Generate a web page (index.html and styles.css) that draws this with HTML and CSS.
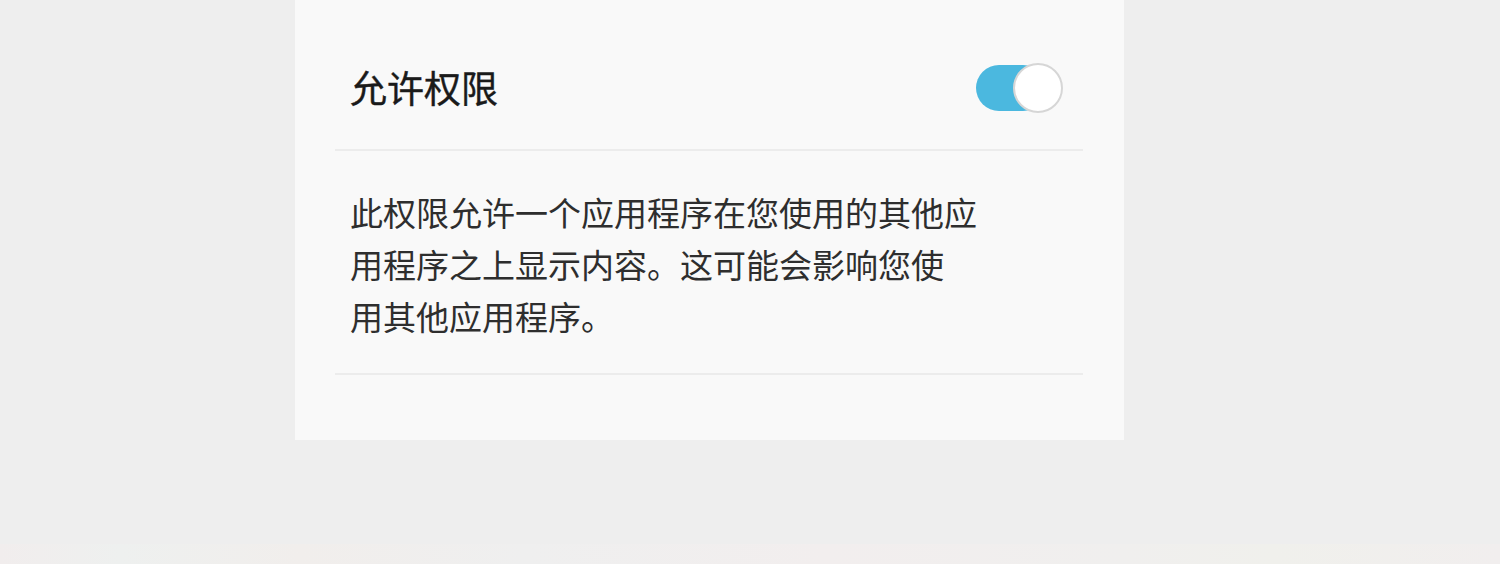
FILE: index.html
```html
<!DOCTYPE html>
<html lang="zh-CN">
<head>
<meta charset="utf-8">
<title>允许权限</title>
<link rel="stylesheet" href="styles.css">
</head>
<body>
<div class="page">
  <div class="card">
    <div class="row">
      <span class="title">允许权限</span>
      <span class="toggle"><span class="thumb"></span></span>
    </div>
    <div class="desc">此权限允许一个应用程序在您使用的其他应<br>用程序之上显示内容。这可能会影响您使<br>用其他应用程序。</div>
  </div>
  <div class="strip"></div>
</div>
</body>
</html>
```
FILE: styles.css
```css
html, body {
  margin: 0;
  padding: 0;
  background: #eeeeee;
}
.page {
  width: 1500px;
  height: 564px;
  display: flex;
  flex-direction: column;
  overflow: hidden;
  font-family: "Noto Sans CJK SC", "Noto Sans", sans-serif;
}
.card {
  margin-left: 295px;
  width: 829px;
  height: 440px;
  background: #f9f9f9;
  padding: 0 41px 0 40px;
  box-sizing: border-box;
}
.row {
  height: 151px;
  display: flex;
  align-items: center;
  justify-content: space-between;
  padding: 26px 20px 0 15px;
  border-bottom: 2px solid #ececec;
  box-sizing: border-box;
}
.title {
  font-size: 37px;
  font-weight: 400;
  color: #1a1a1a;
  line-height: 1;
  -webkit-text-stroke: 0.4px #1a1a1a;
}
.toggle {
  position: relative;
  width: 87px;
  height: 50px;
  display: block;
}
.toggle::before {
  content: "";
  position: absolute;
  left: 0;
  top: 2px;
  width: 70px;
  height: 46px;
  border-radius: 23px;
  background: #4bb8df;
}
.thumb {
  position: absolute;
  right: 0;
  top: 0;
  width: 46px;
  height: 46px;
  border-radius: 50%;
  background: #ffffff;
  border: 2px solid #d6d6d6;
}
.desc {
  padding: 35px 0 31px 15px;
  font-size: 33px;
  line-height: 52px;
  color: #2e2e2e;
  border-bottom: 2px solid #ececec;
}
.strip {
  margin-top: auto;
  height: 20px;
  background: linear-gradient(90deg, #f1eded, #eef0ef 8%, #f1eeec 20%, #efefef 35%, #f2eeee 55%, #f0efee 75%, #f0f0ec 85%, #f1eeee);
}
```
